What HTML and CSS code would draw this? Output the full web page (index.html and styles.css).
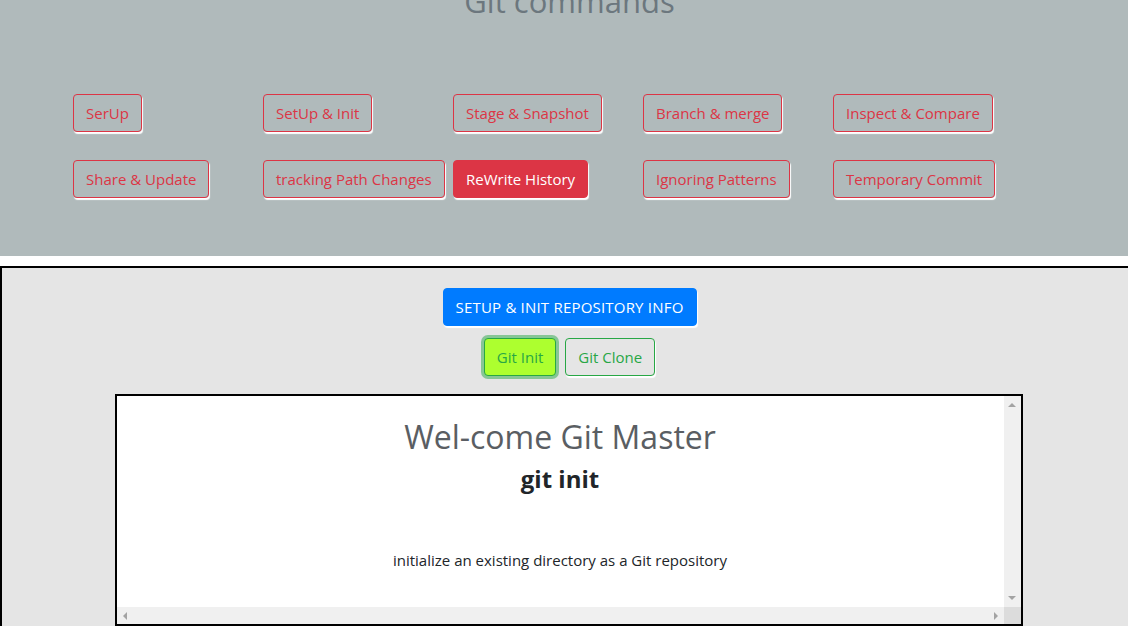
FILE: index.html
```html
<!DOCTYPE html>
<html lang="en">
<head>
<meta charset="utf-8">
<title>Git commands</title>
<link rel="stylesheet" href="styles.css">
</head>
<body>
<div class="page">
  <header class="top">
    <h2 class="title">Git commands</h2>
    <div class="cmd-grid">
      <div class="cell"><button class="btn btn-outline-danger">SerUp</button></div>
      <div class="cell"><button class="btn btn-outline-danger">SetUp &amp; Init</button></div>
      <div class="cell"><button class="btn btn-outline-danger">Stage &amp; Snapshot</button></div>
      <div class="cell"><button class="btn btn-outline-danger">Branch &amp; merge</button></div>
      <div class="cell"><button class="btn btn-outline-danger">Inspect &amp; Compare</button></div>
      <div class="cell"><button class="btn btn-outline-danger">Share &amp; Update</button></div>
      <div class="cell"><button class="btn btn-outline-danger">tracking Path Changes</button></div>
      <div class="cell"><button class="btn btn-danger">ReWrite History</button></div>
      <div class="cell"><button class="btn btn-outline-danger">Ignoring Patterns</button></div>
      <div class="cell"><button class="btn btn-outline-danger">Temporary Commit</button></div>
    </div>
  </header>
  <section class="info">
    <button class="btn btn-primary">SETUP &amp; INIT REPOSITORY INFO</button>
    <div class="sub-buttons">
      <button class="btn btn-success-active">Git Init</button>
      <button class="btn btn-outline-success">Git Clone</button>
    </div>
    <div class="viewer">
      <div class="viewer-content">
        <h1 class="welcome">Wel-come Git Master</h1>
        <h3 class="cmd">git init</h3>
        <p class="desc">initialize an existing directory as a Git repository</p>
      </div>
      <div class="vbar"><span class="arr arr-up"></span><span class="arr arr-down"></span></div>
      <div class="hbar"><span class="arr arr-left"></span><span class="arr arr-right"></span></div>
      <div class="corner"></div>
    </div>
  </section>
</div>
</body>
</html>
```

FILE: styles.css
```css
html, body {
  margin: 0;
  padding: 0;
  overflow: hidden;
  background: #ffffff;
}

body {
  font-family: "Open Sans", "Noto Sans", sans-serif;
  font-size: 16px;
  color: #212529;
}

.page {
  width: 1139px;
}

.top {
  background: #b0babb;
  height: 256px;
  overflow: hidden;
}

.title {
  margin: -18px 0 0;
  text-align: center;
  font-size: 31px;
  line-height: 38px;
  font-weight: 500;
  color: #6c777e;
}

.cmd-grid {
  display: grid;
  grid-template-columns: repeat(5, 190px);
  row-gap: 28px;
  padding-left: 73px;
  margin-top: 74px;
}

.cell {
  display: flex;
  justify-content: flex-start;
}

.btn {
  font-family: inherit;
  font-size: 15px;
  line-height: 24px;
  padding: 6px 12px;
  border-radius: 4px;
  border: 1px solid transparent;
  background: transparent;
  cursor: pointer;
  box-shadow: 1px 2px 1px #ffffff;
  white-space: nowrap;
}

.btn-outline-danger {
  color: #dc3545;
  border-color: #dc3545;
}

.btn-danger {
  color: #ffffff;
  background: #dc3545;
  border-color: #dc3545;
}

.info {
  margin-top: 10px;
  background: #e5e5e5;
  border: 2px solid #000000;
  padding-top: 20px;
  display: flex;
  flex-direction: column;
  align-items: center;
  height: 400px;
}

.btn-primary {
  background: #007bff;
  border-color: #007bff;
  color: #ffffff;
  letter-spacing: 0.2px;
}

.sub-buttons {
  display: flex;
  gap: 9px;
  margin-top: 12px;
}

.btn-success-active {
  background: #adff2f;
  border-color: #28a745;
  color: #28a745;
  box-shadow: 0 0 0 3px rgba(40, 167, 69, 0.5);
}

.btn-outline-success {
  color: #28a745;
  border-color: #28a745;
  box-shadow: 1px 2px 1px #ffffff;
}

.viewer {
  margin-top: 18px;
  margin-right: 2px;
  width: 908px;
  height: 232px;
  box-sizing: border-box;
  border: 2px solid #000000;
  background: #ffffff;
  display: grid;
  grid-template-columns: 1fr 17px;
  grid-template-rows: 1fr 17px;
  overflow: hidden;
}

.viewer-content {
  overflow: hidden;
  text-align: center;
}

.vbar {
  background: #f0f0f0;
  display: flex;
  flex-direction: column;
  justify-content: space-between;
  align-items: center;
  padding: 7px 0;
}

.hbar {
  background: #f0f0f0;
  display: flex;
  justify-content: space-between;
  align-items: center;
  padding: 0 6px;
}

.corner {
  background: #dcdcdc;
}

.arr {
  display: block;
  width: 0;
  height: 0;
}

.arr-up {
  border-left: 4px solid transparent;
  border-right: 4px solid transparent;
  border-bottom: 4px solid #a3a3a3;
}

.arr-down {
  border-left: 4px solid transparent;
  border-right: 4px solid transparent;
  border-top: 4px solid #a3a3a3;
}

.arr-left {
  border-top: 4px solid transparent;
  border-bottom: 4px solid transparent;
  border-right: 4px solid #a3a3a3;
}

.arr-right {
  border-top: 4px solid transparent;
  border-bottom: 4px solid transparent;
  border-left: 4px solid #a3a3a3;
}

.welcome {
  margin: 22px 0 8px;
  font-size: 32px;
  line-height: 38px;
  font-weight: 400;
  color: #5a5e63;
}

.cmd {
  margin: 0;
  font-size: 24px;
  line-height: 29px;
  font-weight: 700;
  color: #212529;
}

.desc {
  margin: 55px 0 0;
  font-size: 15px;
  line-height: 24px;
}
```
